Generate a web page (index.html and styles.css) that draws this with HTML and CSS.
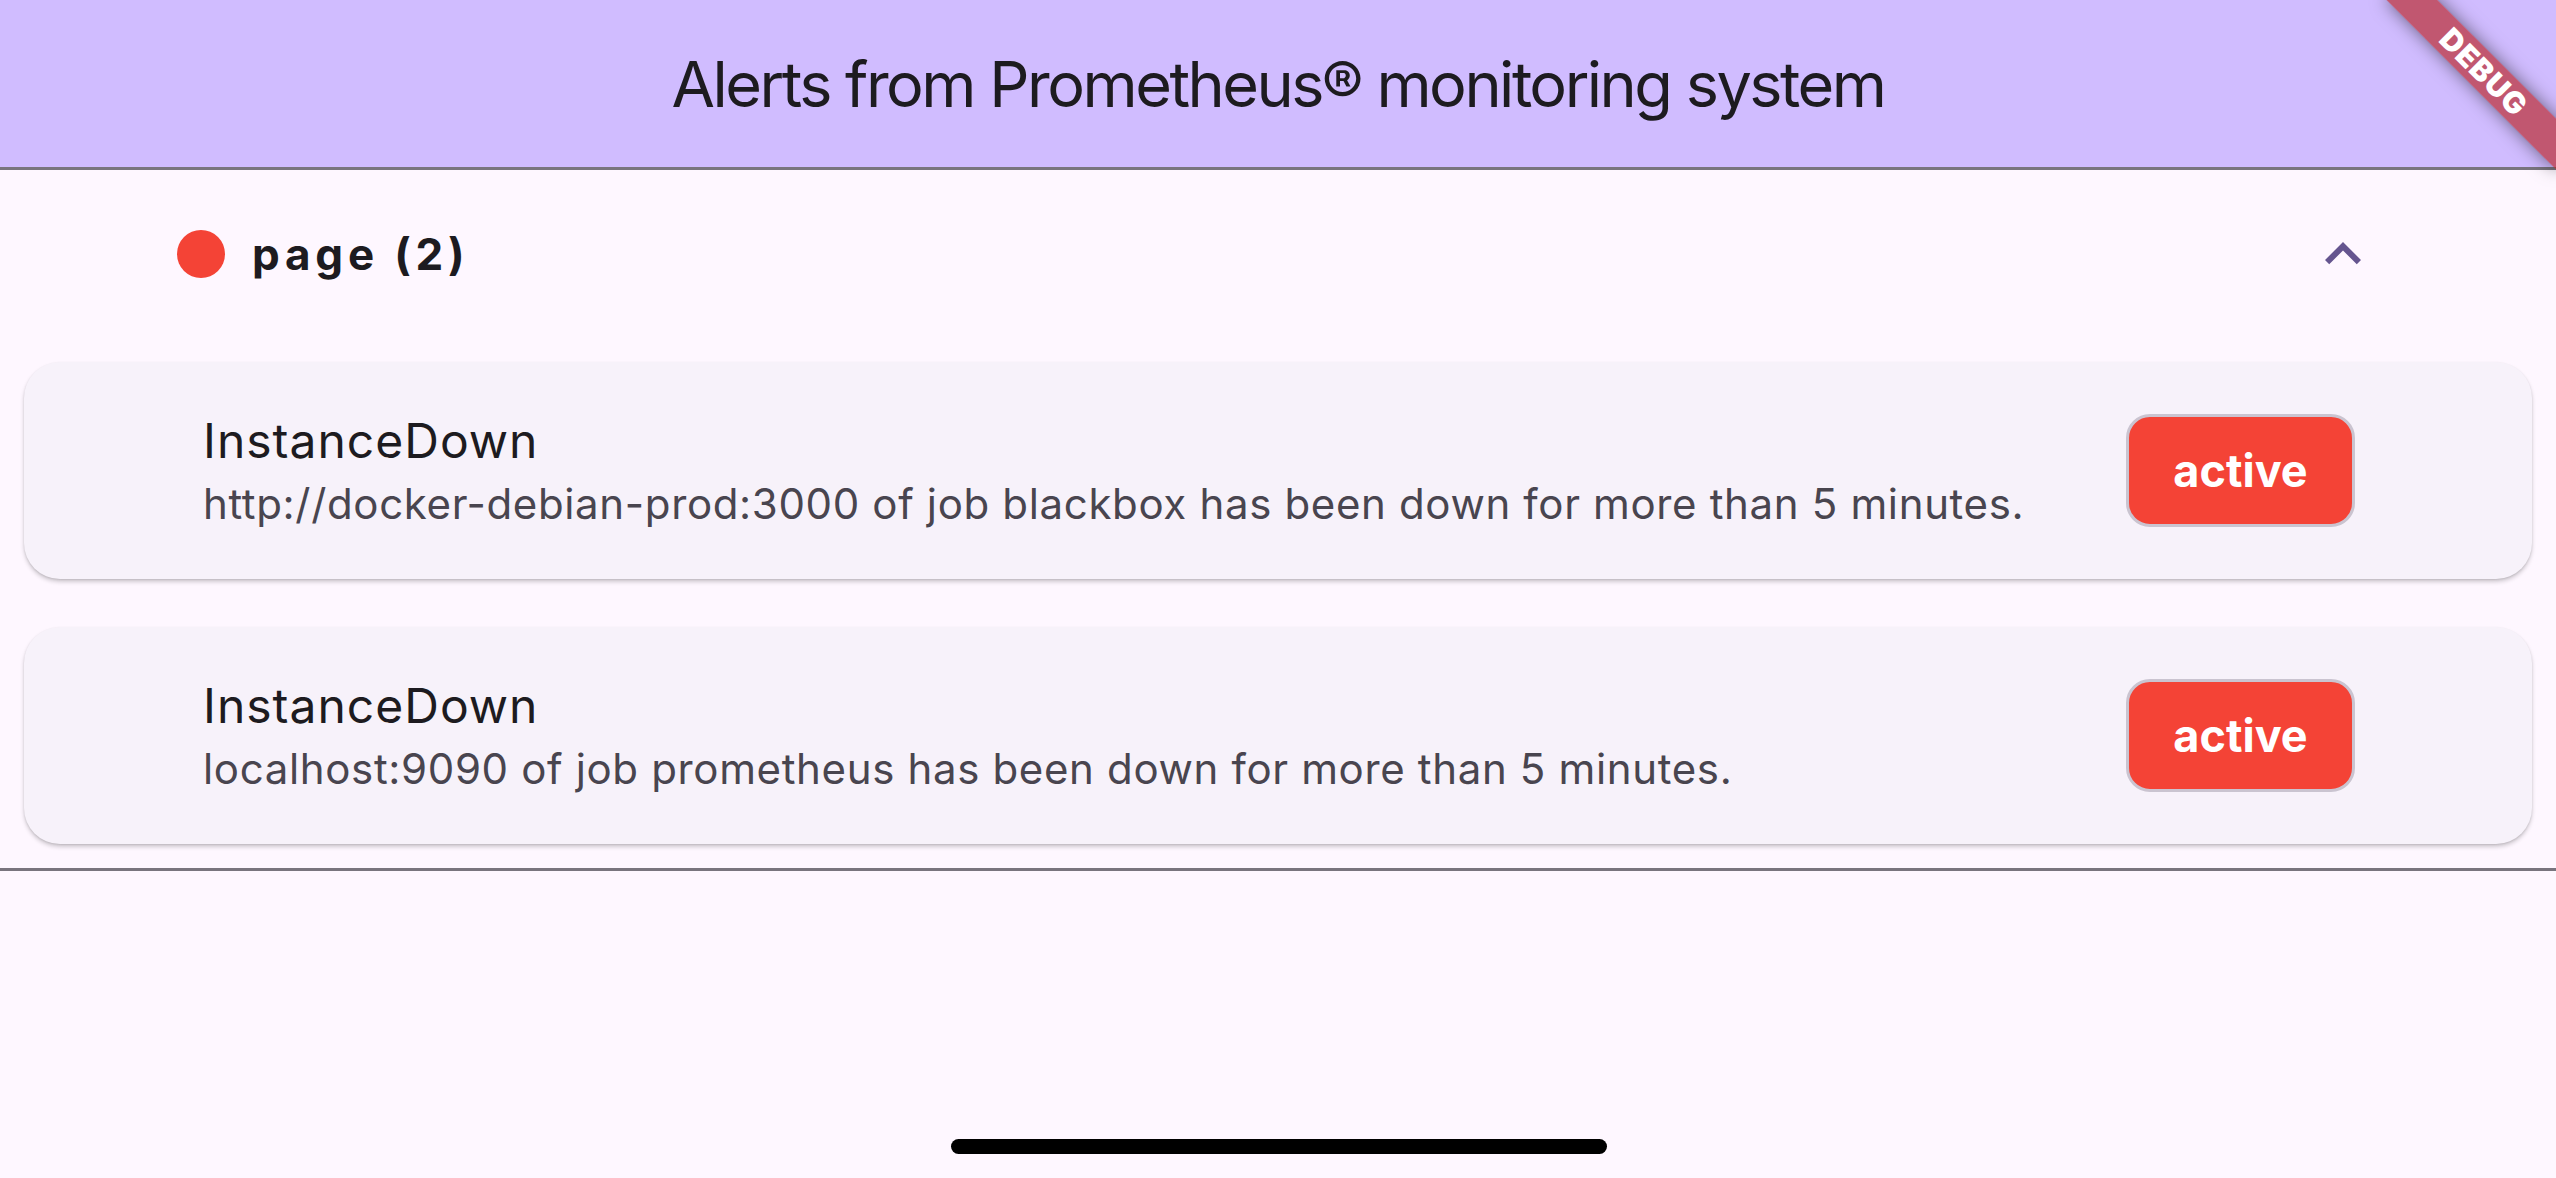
FILE: index.html
```html
<!DOCTYPE html>
<html lang="en">
<head>
<meta charset="utf-8">
<title>Alerts</title>
<link rel="stylesheet" href="styles.css">
</head>
<body>
<div class="app">
  <header class="appbar">
    <h1 class="appbar-title">Alerts from Prometheus® monitoring system</h1>
  </header>
  <section class="group">
    <div class="group-head">
      <div class="group-label">
        <span class="dot"></span>
        <span class="group-name">page (2)</span>
      </div>
      <svg class="chevron" viewBox="0 0 24 24" width="72" height="72"><path d="M12 8l-6 6 1.41 1.41L12 10.83l4.59 4.58L18 14z"/></svg>
    </div>
    <div class="cards">
      <div class="card">
        <div class="card-text">
          <div class="alert-name">InstanceDown</div>
          <div class="alert-desc">http://docker-debian-prod:3000 of job blackbox has been down for more than 5 minutes.</div>
        </div>
        <div class="badge">active</div>
      </div>
      <div class="card">
        <div class="card-text">
          <div class="alert-name">InstanceDown</div>
          <div class="alert-desc">localhost:9090 of job prometheus has been down for more than 5 minutes.</div>
        </div>
        <div class="badge">active</div>
      </div>
    </div>
  </section>
</div>
<div class="debug-banner">DEBUG</div>
<div class="home-indicator"></div>
</body>
</html>
```
FILE: styles.css
```css
html, body {
  margin: 0;
  padding: 0;
  width: 2556px;
  height: 1178px;
  overflow: hidden;
  background: #FEF7FF;
  font-family: Inter, "Noto Sans", sans-serif;
  color: #1D1B20;
}
.app {
  display: flex;
  flex-direction: column;
}
.appbar {
  height: 167px;
  background: #D0BCFF;
  display: flex;
  align-items: center;
  justify-content: center;
}
.appbar-title {
  margin: 0;
  font-size: 63px;
  font-weight: 400;
  letter-spacing: -2.5px;
  color: #1D1B20;
}
.group {
  border-top: 3px solid #79747E;
  border-bottom: 3px solid #79747E;
}
.group-head {
  height: 168px;
  display: flex;
  align-items: center;
  justify-content: space-between;
  padding: 0 177px;
}
.group-label {
  display: flex;
  align-items: center;
  gap: 27px;
}
.dot {
  width: 48px;
  height: 48px;
  border-radius: 50%;
  background: #F44336;
}
.group-name {
  font-size: 44px;
  font-weight: 700;
  letter-spacing: 4.8px;
  color: #1D1B20;
}
.chevron {
  fill: #65558F;
}
.cards {
  display: flex;
  flex-direction: column;
  gap: 48px;
  padding: 24px;
}
.card {
  height: 217px;
  background: #F7F2FA;
  border-radius: 36px;
  box-shadow: 0 3px 4px rgba(0,0,0,0.18), 0 1px 2px rgba(0,0,0,0.1);
  display: flex;
  align-items: center;
  justify-content: space-between;
  padding: 0 177px 0 179px;
}
.card-text {
  display: flex;
  flex-direction: column;
}
.alert-name {
  font-size: 48px;
  line-height: 66px;
  letter-spacing: 1px;
  color: #1D1B20;
}
.alert-desc {
  font-size: 42px;
  line-height: 60px;
  letter-spacing: 0.65px;
  color: #49454F;
}
.badge {
  width: 223px;
  height: 107px;
  box-sizing: content-box;
  border: 3px solid #CAC4D0;
  border-radius: 24px;
  background: #F44336;
  color: #FFFFFF;
  font-size: 45px;
  font-weight: 700;
  display: flex;
  align-items: center;
  justify-content: center;
}
.debug-banner {
  position: absolute;
  left: 2364px;
  top: 54px;
  width: 240px;
  height: 36px;
  transform: rotate(45deg);
  background: rgba(183, 28, 28, 0.63);
  box-shadow: 0 0 18px rgba(0,0,0,0.5);
  color: #FFFFFF;
  font-size: 30px;
  font-weight: 900;
  line-height: 36px;
  text-align: center;
  letter-spacing: 1px;
}
.home-indicator {
  position: absolute;
  left: 951px;
  top: 1139px;
  width: 656px;
  height: 15px;
  border-radius: 8px;
  background: #000000;
}
```
